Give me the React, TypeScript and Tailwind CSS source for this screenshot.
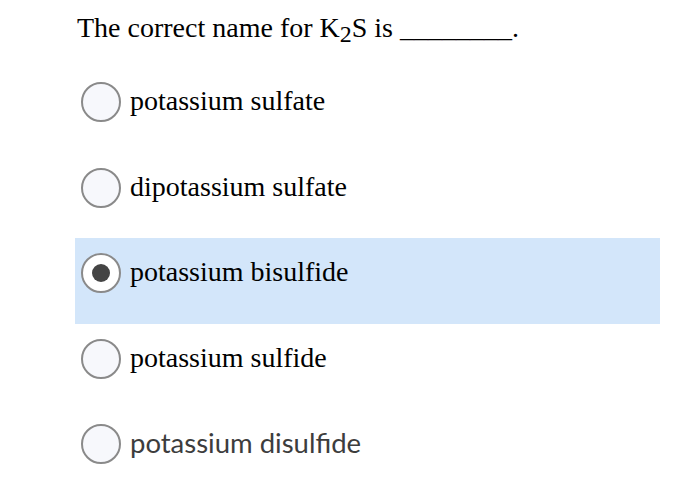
import React from 'react';

const options = [
  { label: 'potassium sulfate', selected: false, sans: false },
  { label: 'dipotassium sulfate', selected: false, sans: false },
  { label: 'potassium bisulfide', selected: true, sans: false },
  { label: 'potassium sulfide', selected: false, sans: false },
  { label: 'potassium disulfide', selected: false, sans: true },
];

function Radio({ selected }: { selected: boolean }) {
  return (
    <div
      className={`w-[40px] h-[40px] shrink-0 rounded-full border-2 border-[#8a8a8a] flex items-center justify-center ${
        selected ? 'bg-white' : 'bg-[#f7f8fc]'
      }`}
    >
      {selected && <div className="w-[18px] h-[18px] rounded-full bg-[#444]" />}
    </div>
  );
}

export default function App() {
  return (
    <div className="w-[700px] h-[483px] bg-white overflow-hidden pl-[75px]">
      <div
        className="pt-[11px] h-[67px] pl-[2px] text-[28px] leading-[34px] text-black whitespace-nowrap"
        style={{ fontFamily: '"Liberation Serif", serif' }}
      >
        The correct name for K<span className="text-[24px] relative top-[5px]">2</span>S is ________.
      </div>
      <div className="w-[585px]">
        {options.map((o) => (
          <div
            key={o.label}
            className={`h-[85.5px] flex items-start pt-[15px] pl-[6px] ${o.selected ? 'bg-[#d3e6fa]' : ''}`}
          >
            <Radio selected={o.selected} />
            <span
              className={`ml-[9px] leading-[38px] ${
                o.sans ? 'text-[27.5px] text-[#3d3d3d]' : 'text-[28px] text-black'
              }`}
              style={{ fontFamily: o.sans ? 'Lato, sans-serif' : '"Liberation Serif", serif' }}
            >
              {o.label}
            </span>
          </div>
        ))}
      </div>
    </div>
  );
}
